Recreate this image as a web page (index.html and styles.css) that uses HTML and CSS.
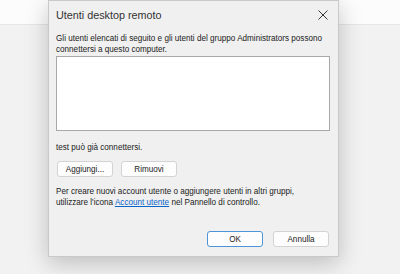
FILE: index.html
```html
<!DOCTYPE html>
<html lang="it">
<head>
    <meta charset="UTF-8">
    <title>Utenti desktop remoto</title>
    <link rel="stylesheet" href="styles.css">
</head>
<body>
    <div class="desktop">
        <div class="top-strip"></div>
        <div class="dialog">
            <div class="title-bar">
                <span class="title">Utenti desktop remoto</span>
                <span class="close">
                    <svg width="10" height="10" viewBox="0 0 10 10"><path d="M0.5 0.5 L9.5 9.5 M9.5 0.5 L0.5 9.5" stroke="#333" stroke-width="1"/></svg>
                </span>
            </div>
            <div class="content">
                <p class="intro">Gli utenti elencati di seguito e gli utenti del gruppo Administrators possono connettersi a questo computer.</p>
                <div class="user-list"></div>
                <p class="status">test può già connettersi.</p>
                <div class="row-buttons">
                    <button class="btn">Aggiungi...</button>
                    <button class="btn">Rimuovi</button>
                </div>
                <p class="note">Per creare nuovi account utente o aggiungere utenti in altri gruppi,<br>utilizzare l'icona <a href="#">Account utente</a> nel Pannello di controllo.</p>
            </div>
            <div class="footer">
                <button class="btn primary">OK</button>
                <button class="btn">Annulla</button>
            </div>
        </div>
    </div>
</body>
</html>
```
FILE: styles.css
```css
body {
    margin: 0;
    font-family: 'Liberation Sans', Arial, sans-serif;
    color: #222;
}
.desktop {
    position: relative;
    width: 400px;
    height: 274px;
    overflow: hidden;
    background-color: #f2f2f2;
}
.top-strip {
    height: 24px;
    background-color: #fcfcfc;
    border-bottom: 1px solid #e6e6e6;
}
.dialog {
    position: absolute;
    left: 48px;
    top: 0;
    width: 289px;
    height: 255px;
    background-color: #f0f0f0;
    border: 1px solid #c9c9c9;
    box-shadow: 0 6px 22px rgba(0, 0, 0, 0.22);
    display: flex;
    flex-direction: column;
}
.title-bar {
    display: flex;
    align-items: center;
    justify-content: space-between;
    height: 27px;
    padding: 0 8px 0 7px;
}
.title {
    font-size: 10.8px;
    color: #333;
}
.close {
    display: flex;
    margin-right: 2px;
}
.content {
    padding: 5px 8px 0 7px;
    font-size: 8.15px;
    line-height: 11px;
}
.intro {
    margin: 0;
}
.user-list {
    height: 73px;
    margin-top: 1px;
    background-color: #fff;
    border: 1px solid #a8a8a8;
}
.status {
    margin: 11px 0 0;
}
.row-buttons {
    display: flex;
    gap: 8px;
    margin-top: 8px;
    padding-left: 1px;
}
.btn {
    width: 56px;
    height: 16px;
    padding: 0;
    font-family: inherit;
    font-size: 8.15px;
    color: #222;
    background-color: #fdfdfd;
    border: 1px solid #d3d3d3;
    border-radius: 3px;
}
.btn.primary {
    border-color: #4d93d6;
}
.note {
    margin: 9px 0 0;
}
.note a {
    color: #0a64c8;
}
.footer {
    display: flex;
    justify-content: flex-end;
    gap: 10px;
    margin-top: auto;
    padding: 0 9px 9px 0;
}
```
